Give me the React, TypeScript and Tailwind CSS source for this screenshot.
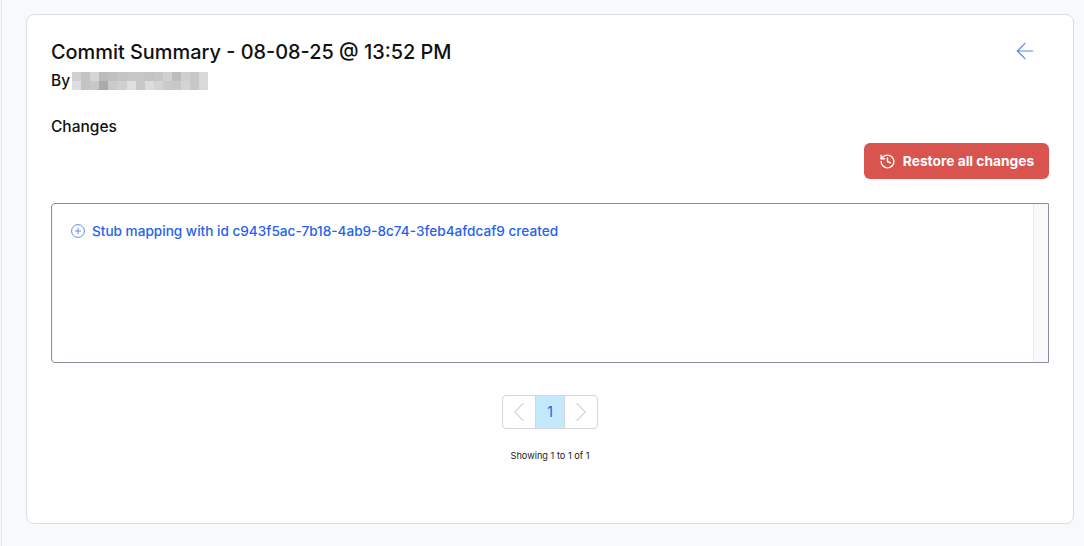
import { History, ArrowLeft, ChevronLeft, ChevronRight } from "lucide-react";

const row1 = ["#d0d0d0","#c4c4c4","#d6d6d6","#bcbcbc","#c0c0c0","#c4c4c4","#c6c6c6","#c6c6c6","#c4c4c4","#c6c6c6","#d0d0d0","#bcbcbc","#cfcfcf","#c8c8c8","#d8d8d8"];
const row2 = ["#dedede","#c4c4c4","#c8c8c8","#ababab","#cacaca","#d0d0d0","#e0e0e0","#c8c8c8","#dcdcdc","#d4d4d4","#cacaca","#c8c8c8","#d4d4d4","#c8c8c8","#dadada"];

export default function App() {
  return (
    <div className="h-[546px] w-[1084px] overflow-hidden bg-[#f8f9fb] pl-[1px] font-['Inter',sans-serif]">
      <div className="h-full border-l border-[#e3e4e8] pl-6 pr-[10px] pt-[14px]">
        <div className="h-[510px] rounded-lg border border-[#dcdde1] bg-white pl-6 pr-6 pt-6">
          <div className="flex items-start justify-between">
            <div>
              <h1 className="text-[19.9px] font-medium leading-[26px] text-[#111]">Commit Summary - 08-08-25 @ 13:52 PM</h1>
              <div className="mt-[4px] flex items-center gap-[2px] text-[15.5px] font-medium leading-[24px] text-[#111]">
                <span>By</span>
                <div className="grid h-[18px] w-[136px] grid-cols-[repeat(15,1fr)] grid-rows-2">
                  {[...row1, ...row2].map((c, i) => (
                    <div key={i} style={{ backgroundColor: c }} />
                  ))}
                </div>
              </div>
            </div>
            <ArrowLeft className="mr-[11px] mt-[-1px] h-[26px] w-[26px] text-[#4f86f7]" strokeWidth={1.1} />
          </div>
          <h2 className="mt-[22px] text-[15.5px] font-medium leading-[24px] text-[#111]">Changes</h2>
          <div className="mt-[4px] flex justify-end">
            <button className="flex h-9 w-[185px] items-center justify-center gap-[7px] rounded-md bg-[#d9534f] text-[13.75px] font-bold text-white">
              <History className="h-[17px] w-[17px]" strokeWidth={2} />
              Restore all changes
            </button>
          </div>
          <div className="mt-6 flex h-[160px] rounded-l-sm border border-[#8e8e9c]">
            <div className="flex-1 px-[19px] pt-[17px]">
              <div className="flex items-center gap-[7px] text-[13.6px] font-medium leading-5 text-[#2563eb]">
                <svg width="14" height="14" viewBox="0 0 14 14" fill="none" stroke="#5b8def" strokeWidth="1">
                  <circle cx="7" cy="7" r="6.4" />
                  <path d="M7 4v6M4 7h6" />
                </svg>
                Stub mapping with id c943f5ac-7b18-4ab9-8c74-3feb4afdcaf9 created
              </div>
            </div>
            <div className="w-[15px] border-l border-[#e8e8e8] bg-[#f9f9f9]" />
          </div>
          <div className="mt-8 flex justify-center">
            <div className="grid h-[34px] w-[96px] grid-cols-[32px_30px_32px] overflow-hidden rounded border border-[#d3d5da]">
              <div className="flex items-center justify-center overflow-hidden">
                <ChevronLeft className="h-[34px] w-[34px] shrink-0 text-[#d3d5da]" strokeWidth={0.8} />
              </div>
              <div className="flex items-center justify-center border-x border-[#d3d5da] bg-[#c3e9fb] text-sm text-[#2563eb]">1</div>
              <div className="flex items-center justify-center overflow-hidden">
                <ChevronRight className="h-[34px] w-[34px] shrink-0 text-[#d3d5da]" strokeWidth={0.8} />
              </div>
            </div>
          </div>
          <p className="mt-[19px] text-center text-[9.2px] leading-[16px] text-[#222]">Showing 1 to 1 of 1</p>
        </div>
      </div>
    </div>
  );
}
